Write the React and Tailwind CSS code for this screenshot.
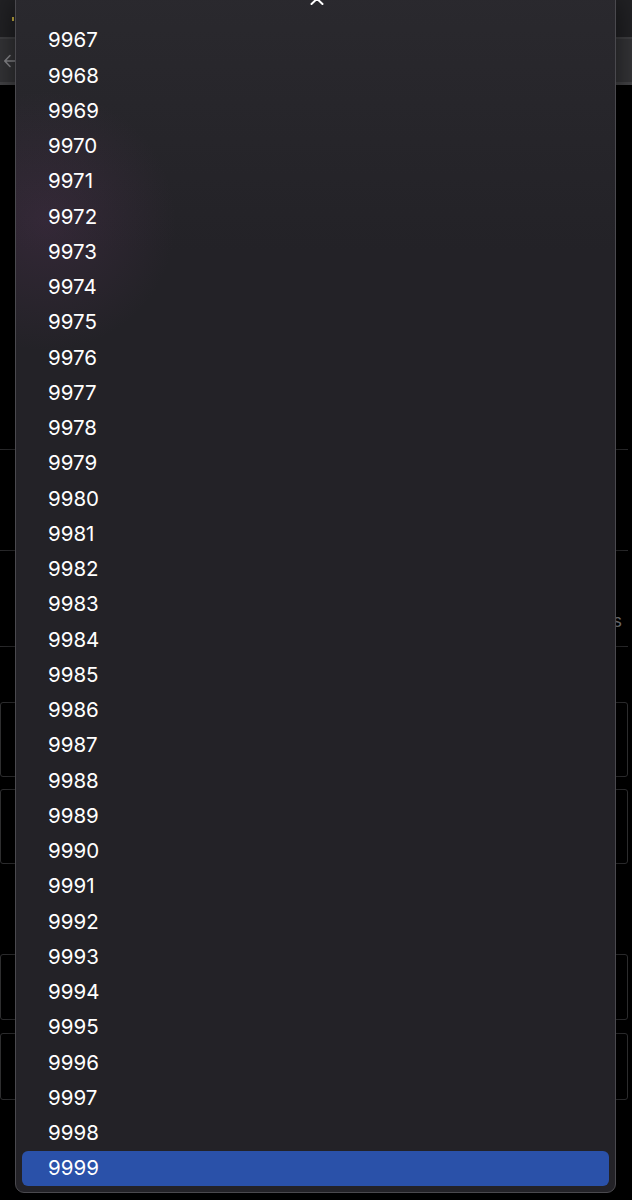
import React from "react";

const years = Array.from({ length: 33 }, (_, i) => 9967 + i);

const PickerMenu = ({ selected }) => {
    return (
        <div className="absolute left-[15px] top-[-10px] h-[1203px] w-[601px] overflow-hidden rounded-b-[9px] border border-[#4a494e] bg-[#232227] bg-[radial-gradient(circle_at_30px_230px,rgba(110,60,110,0.22),transparent_130px),linear-gradient(to_bottom,#2a292e,#232227_260px)] shadow-[0_10px_30px_rgba(0,0,0,0.6)]">
            {/* scroll up arrow */}
            <div className="flex h-[22px] justify-center pt-[6px]">
                <svg width="14" height="8" viewBox="0 0 14 8" fill="none" className="ml-[2px]">
                    <path d="M1.5 7L7 1.8L12.5 7" stroke="#ffffff" strokeWidth="2" strokeLinecap="round" strokeLinejoin="round" />
                </svg>
            </div>

            <div className="flex flex-col px-[6px] pt-[10px]">
                {years.map((year) => (
                    <div
                        key={year}
                        className={`flex h-[35.25px] shrink-0 items-center rounded-[6px] pl-[26px] text-[20.5px] leading-none text-white ${year === selected ? "bg-[#2a51a9]" : ""
                            }`}
                    >
                        {year}
                    </div>
                ))}
            </div>
        </div>
    );
};

export default function App() {
    return (
        <div
            className="relative h-[1200px] w-[632px] overflow-hidden bg-black"
            style={{ fontFamily: "Inter, 'Noto Sans', sans-serif" }}
        >
            {/* page behind the menu */}
            <div className="flex h-[37px] items-center bg-[#222225] px-[12px]">
                <span className="h-[4px] w-[2px] bg-[#c8b040]" />
                <div className="ml-auto mr-[8px] flex flex-col gap-[3px]">
                    <span className="h-[3px] w-[3px] bg-[#6a6a6e]" />
                    <span className="h-[3px] w-[3px] bg-[#6a6a6e]" />
                </div>
            </div>
            <div className="h-[2px] bg-[#404043]" />
            <div className="flex h-[46px] items-center border-b-[3px] border-[#444447] bg-[#353538] px-[3px]">
                <svg width="14" height="16" viewBox="0 0 14 16" fill="none">
                    <path d="M12 8H2M7 2.5L1.8 8L7 13.5" stroke="#8c8c90" strokeWidth="1.6" strokeLinecap="round" strokeLinejoin="round" />
                </svg>
            </div>

            <div className="mr-[4px] flex flex-col">
                <div className="h-[365px] border-b border-[#2e2e30]" />
                <div className="h-[101px] border-b border-[#2e2e30]" />
                <div className="flex h-[96px] items-end justify-end border-b border-[#2e2e30] pb-[16px] text-[17px] leading-none text-[#8a8a8e]">
                    <span className="mr-[6px]">s</span>
                </div>
                <div className="h-[55px]" />
                <div className="h-[75px] rounded-[3px] border border-[#333335]" />
                <div className="mt-[12px] h-[75px] rounded-[3px] border border-[#333335]" />
                <div className="h-[90px]" />
                <div className="h-[66px] rounded-[3px] border border-[#333335]" />
                <div className="mt-[13px] h-[67px] rounded-[3px] border border-[#333335]" />
            </div>

            <PickerMenu selected={9999} />
        </div>
    );
}
